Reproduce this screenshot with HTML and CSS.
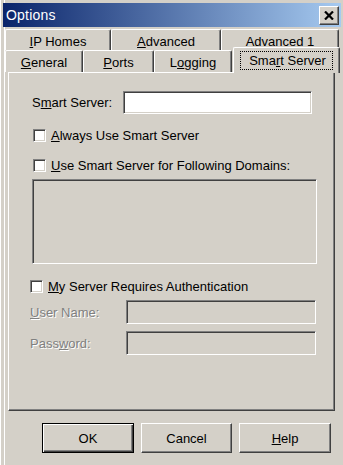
FILE: index.html
```html
<!doctype html>
<html lang="en">
  <head>
    <title>Options</title>
    <meta charset="UTF-8">
    <link rel="stylesheet" href="styles.css">
  </head>
  <body>
    <div class="window">
      <div class="titlebar">
        <span class="title">Options</span>
        <div class="closeBtn">
          <svg width="10" height="9" viewBox="0 0 10 9">
            <path d="M1 0.5L9 8.5M9 0.5L1 8.5" stroke="#000" stroke-width="2.2" fill="none"/>
          </svg>
        </div>
      </div>

      <div class="tabs">
        <div class="tabRow">
          <div class="tab" style="width:106px"><span><u>I</u>P Homes</span></div>
          <div class="tab" style="width:110px"><span><u>A</u>dvanced</span></div>
          <div class="tab" style="width:118px"><span>Advanced <u>1</u></span></div>
        </div>
        <div class="tabRow">
          <div class="tab" style="width:78px"><span><u>G</u>eneral</span></div>
          <div class="tab" style="width:71px"><span><u>P</u>orts</span></div>
          <div class="tab" style="width:78px"><span>L<u>o</u>gging</span></div>
          <div class="tab selected" style="width:107px"><span class="focus">Sma<u>r</u>t Server</span></div>
        </div>
      </div>

      <div class="panel">
        <div class="row serverRow">
          <span class="label">S<u>m</u>art Server:</span>
          <div class="field serverField"></div>
        </div>
        <label class="check first"><span class="box"></span><span><u>A</u>lways Use Smart Server</span></label>
        <label class="check second"><span class="box"></span><span><u>U</u>se Smart Server for Following Domains:</span></label>
        <div class="field listBox"></div>
        <label class="check third"><span class="box"></span><span><u>M</u>y Server Requires Authentication</span></label>
        <div class="row authRow">
          <span class="label disabled"><u>U</u>ser Name:</span>
          <div class="field authField"></div>
        </div>
        <div class="row authRow pwRow">
          <span class="label disabled">Pass<u>w</u>ord:</span>
          <div class="field authField"></div>
        </div>
      </div>

      <div class="buttons">
        <div class="btn default">OK</div>
        <div class="btn" style="width:91px">Cancel</div>
        <div class="btn"><span><u>H</u>elp</span></div>
      </div>
    </div>
  </body>
</html>
```

FILE: styles.css
```css
body {
  margin: 0;
  background-color: #d4d0c8;
  font-family: "Liberation Sans", Arial, sans-serif;
  font-size: 13px;
  color: #000;
}

.window {
  width: 343px;
  height: 465px;
  box-sizing: border-box;
  padding: 3px 2px 0 2px;
  background-color: #d4d0c8;
  border-left: 1px solid #fff;
  box-shadow: inset 3px 0 0 #d4d0c8, inset 4px 0 0 #fff;
  overflow: hidden;
}

.titlebar {
  height: 24px;
  display: flex;
  align-items: center;
  justify-content: space-between;
  padding: 0 2px 0 3px;
  background: linear-gradient(to right, #0a246a, #a6caf0);
}

.title {
  color: #fff;
  font-size: 14px;
  letter-spacing: 0.2px;
}

.closeBtn {
  width: 20px;
  height: 19px;
  box-sizing: border-box;
  display: flex;
  align-items: center;
  justify-content: center;
  background-color: #d4d0c8;
  border-top: 1px solid #fff;
  border-left: 1px solid #fff;
  border-right: 1px solid #404040;
  border-bottom: 1px solid #404040;
  box-shadow: inset -1px -1px 0 #808080;
}

/* tab strip */
.tabs {
  margin-top: 2px;
  padding-left: 2px;
}

.tabRow {
  display: flex;
  height: 21px;
}

.tabRow + .tabRow {
  height: 22px;
}

.tab {
  box-sizing: border-box;
  display: flex;
  align-items: center;
  justify-content: center;
  border-top: 1px solid #fff;
  border-left: 1px solid #fff;
  border-right: 1px solid #404040;
  box-shadow: inset -1px 0 0 #808080;
  border-radius: 2px 2px 0 0;
  padding-top: 2px;
}

.tab.selected {
  margin-top: -3px;
  margin-left: 1px;
  height: 26px;
  position: relative;
  z-index: 1;
  background-color: #d4d0c8;
  padding-top: 0;
  padding-bottom: 1px;
}

.focus {
  border: 1px dotted #000;
  padding: 1px 6px 1px 8px;
}

/* page */
.panel {
  margin-left: 5px;
  width: 327px;
  height: 339px;
  box-sizing: border-box;
  border-top: 1px solid #fff;
  border-left: 1px solid #fff;
  border-right: 1px solid #404040;
  border-bottom: 1px solid #404040;
  box-shadow: inset -1px -1px 0 #808080;
  padding: 18px 0 0 23px;
  display: flex;
  flex-direction: column;
  align-items: flex-start;
}

.row {
  display: flex;
  align-items: center;
}

.field {
  box-sizing: border-box;
  border-top: 1px solid #808080;
  border-left: 1px solid #808080;
  border-right: 1px solid #fff;
  border-bottom: 1px solid #fff;
  box-shadow: inset 1px 1px 0 #404040, inset -1px -1px 0 #d4d0c8;
}

.serverField {
  width: 189px;
  height: 23px;
  margin-left: 11px;
  background-color: #fff;
}

.check {
  display: flex;
  align-items: center;
  margin-left: 1px;
  height: 16px;
}

.check.first { margin-top: 13px; }
.check.second { margin-top: 14px; }
.check.third { margin-top: 14px; margin-left: -2px; }

.box {
  width: 13px;
  height: 13px;
  box-sizing: border-box;
  margin-right: 5px;
  background-color: #fff;
  border-top: 1px solid #808080;
  border-left: 1px solid #808080;
  border-right: 1px solid #fff;
  border-bottom: 1px solid #fff;
  box-shadow: inset 1px 1px 0 #404040, inset -1px -1px 0 #d4d0c8;
}

.listBox {
  width: 285px;
  height: 85px;
  margin-top: 6px;
  background-color: #d4d0c8;
}

.authRow {
  margin-top: 6px;
  margin-left: -2px;
}

.pwRow {
  margin-top: 7px;
}

.authField {
  width: 190px;
  height: 24px;
  margin-left: auto;
  background-color: #d4d0c8;
}

.authRow .label {
  width: 96px;
}

.disabled {
  color: #808080;
  text-shadow: 1px 1px 0 #fff;
}

/* dialog buttons */
.buttons {
  display: flex;
  gap: 7px;
  padding: 12px 0 0 39px;
}

.btn {
  width: 92px;
  height: 30px;
  box-sizing: border-box;
  display: flex;
  align-items: center;
  justify-content: center;
  border-top: 1px solid #fff;
  border-left: 1px solid #fff;
  border-right: 1px solid #404040;
  border-bottom: 1px solid #404040;
  box-shadow: inset -1px -1px 0 #808080;
}

.btn.default {
  border: 1px solid #000;
  box-shadow: inset 1px 1px 0 #fff, inset -1px -1px 0 #404040, inset -2px -2px 0 #808080;
}
```
